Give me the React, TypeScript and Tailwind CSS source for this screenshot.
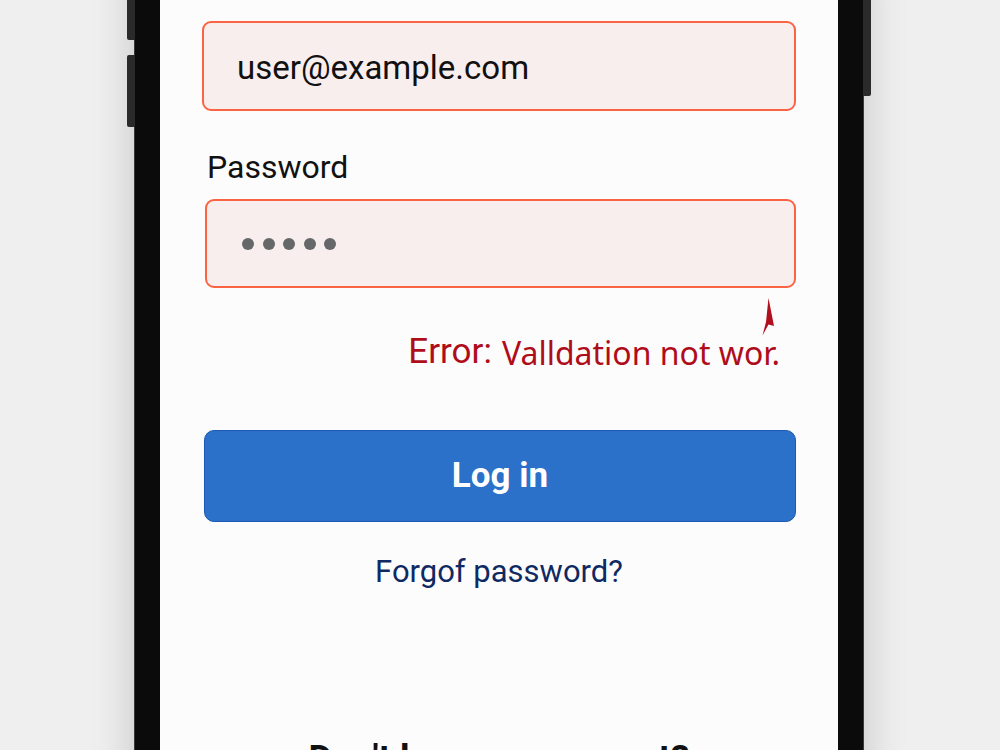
import React from "react";

const sans = { fontFamily: "Roboto, 'Liberation Sans', sans-serif" };

function PasswordDots() {
  return (
    <div className="flex items-center gap-[8.5px]">
      {[0, 1, 2, 3, 4].map((i) => (
        <span key={i} className="block w-[12px] h-[12px] rounded-full bg-[#666769]" />
      ))}
    </div>
  );
}

export default function App() {
  return (
    <div
      className="w-[1000px] h-[750px] overflow-hidden bg-[#efefef] flex justify-center"
      style={sans}
    >
      {/* handset */}
      <div className="relative ml-[-2px] w-[730px] h-[900px] mt-[-40px] shrink-0">
        {/* side keys */}
        <div className="absolute left-[-7px] top-[0px] w-[8px] h-[80px] rounded-l-[2px] bg-[#2a2a2a]" />
        <div className="absolute left-[-7px] top-[95px] w-[8px] h-[72px] rounded-l-[2px] bg-[#2a2a2a]" />
        <div className="absolute right-[-7px] top-[0px] w-[8px] h-[136px] rounded-r-[2px] bg-[#2a2a2a]" />

        <div className="w-full h-full bg-[#0b0b0b] border border-[#3a3a3a] px-[25px] shadow-[0_0_40px_rgba(0,0,0,0.18)]">
          <div className="w-full h-full bg-[#fcfcfc] pt-[60px] px-[42px] flex flex-col">
            {/* email */}
            <div className="h-[90px] rounded-[9px] border-2 border-[#fa6443] bg-[#f9eeee] flex items-center pl-[33px]">
              <span className="text-[33px] leading-[40px] text-[#111] mt-[4px]">user@example.com</span>
            </div>

            {/* password */}
            <label className="mt-[38px] ml-[5px] text-[32px] leading-[36px] text-[#111]">Password</label>
            <div className="mt-[14px] ml-[3px] h-[89px] rounded-[9px] border-2 border-[#fa6443] bg-[#f9eeee] flex items-center pl-[35px]">
              <PasswordDots />
            </div>

            {/* validation message */}
            <div className="relative h-[142px]">
              <svg
                className="absolute right-[21px] top-[10px]"
                width="13"
                height="38"
                viewBox="0 0 13 38"
              >
                <path d="M6.5 0 L12 28 L6.5 26.5 L0.5 37.5 L4 24 Z" fill="#b0101e" />
              </svg>
              <div className="absolute right-[16px] top-[42px] flex items-baseline gap-[10px] text-[#b00d1b]">
                <span className="text-[35px] leading-[42px]">Error:</span>
                <span
                  className="text-[32px] leading-[42px] relative top-[2px]"
                  style={{ fontFamily: "'Noto Sans', 'Open Sans', sans-serif" }}
                >
                  Valldation not wor.
                </span>
              </div>
            </div>

            {/* submit */}
            <button className="ml-[2px] h-[92px] rounded-[10px] bg-[#2b70c9] border border-[#1d5ab3] text-white text-[35px] font-bold">
              Log in
            </button>

            <div className="mt-[32px] text-center text-[31px] leading-[36px] text-[#0f2a63]">
              Forgof password?
            </div>

            <div className="mt-[151px] text-center text-[37px] leading-[36px] font-bold text-[#111]">
              Don't have an account?
            </div>
          </div>
        </div>
      </div>
    </div>
  );
}
